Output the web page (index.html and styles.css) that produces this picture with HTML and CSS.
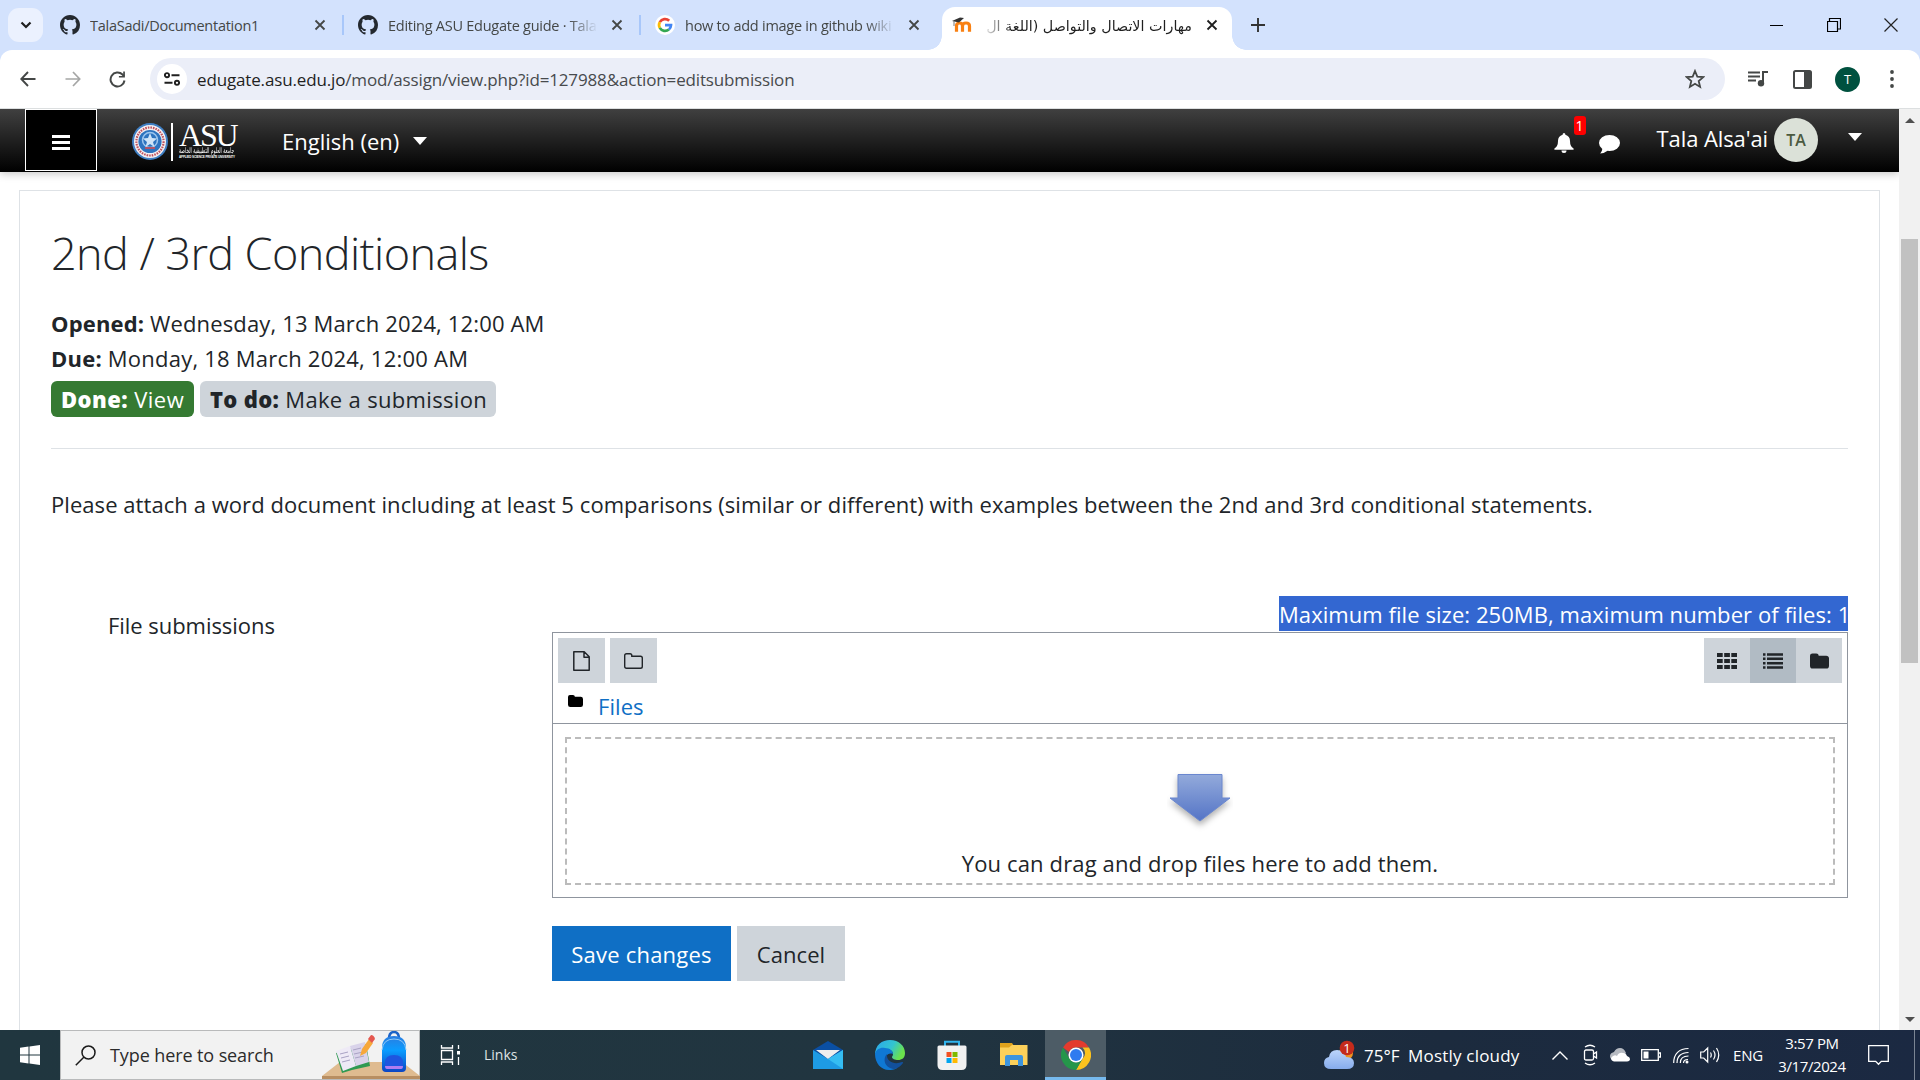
FILE: index.html
```html
<!DOCTYPE html>
<html lang="en">
<head>
<meta charset="utf-8">
<title>Editing submission</title>
<link rel="stylesheet" href="styles.css">
</head>
<body>
<svg class="defs" width="0" height="0">
  <symbol id="github" viewBox="0 0 16 16"><path fill="#24292f" d="M8 0C3.58 0 0 3.58 0 8c0 3.54 2.29 6.53 5.47 7.59.4.07.55-.17.55-.38 0-.19-.01-.82-.01-1.49-2.01.37-2.53-.49-2.69-.94-.09-.23-.48-.94-.82-1.13-.28-.15-.68-.52-.01-.53.63-.01 1.08.58 1.23.82.72 1.21 1.87.87 2.33.66.07-.52.28-.87.51-1.07-1.78-.2-3.64-.89-3.64-3.95 0-.87.31-1.59.82-2.15-.08-.2-.36-1.02.08-2.12 0 0 .67-.21 2.2.82a7.4 7.4 0 0 1 4 0c1.53-1.04 2.2-.82 2.2-.82.44 1.1.16 1.92.08 2.12.51.56.82 1.27.82 2.15 0 3.07-1.87 3.75-3.65 3.95.29.25.54.73.54 1.48 0 1.07-.01 1.93-.01 2.2 0 .21.15.46.55.38A8 8 0 0 0 16 8c0-4.42-3.58-8-8-8z"/></symbol>
  <symbol id="x" viewBox="0 0 12 12"><path d="M1.5 1.5l9 9M10.5 1.5l-9 9" stroke="currentColor" stroke-width="1.8" fill="none"/></symbol>
  <symbol id="folder" viewBox="0 0 20 16"><path fill="currentColor" d="M0 2.6A2.6 2.6 0 0 1 2.6 0h4A2.6 2.6 0 0 1 9.2 2.4H17A3 3 0 0 1 20 5.200V13a3 3 0 0 1-3 3H3a3 3 0 0 1-3-3z"/></symbol>
</svg>

<header class="tabstrip">
  <button class="tab-search"><svg width="12" height="8" viewBox="0 0 12 8"><path d="M1.500 1.500l4.500 4.500 4.500-4.500" fill="none" stroke="#1f1f1f" stroke-width="2.200"/></svg></button>
  <div class="tab"><svg class="fav"><use href="#github"/></svg><span class="tab-title"><span class="t-a">TalaSadi/Documentation1</span></span><svg class="close"><use href="#x"/></svg></div>
  <i class="tab-sep"></i>
  <div class="tab"><svg class="fav"><use href="#github"/></svg><span class="tab-title fade"><span class="t-b">Editing ASU Edugate guide · Tala</span></span><svg class="close"><use href="#x"/></svg></div>
  <i class="tab-sep"></i>
  <div class="tab"><svg class="fav" viewBox="0 0 20 20"><circle cx="10" cy="10" r="10" fill="#fff"/><g fill="none" stroke-width="2.700"><path stroke="#ea4335" d="M4.800 7.100A6 6 0 0 1 14.200 5.800"/><path stroke="#fbbc05" d="M4.800 12.900A6 6 0 0 1 4.800 7.100"/><path stroke="#34a853" d="M13.900 14.500A6 6 0 0 1 4.800 12.900"/><path stroke="#4285f4" d="M10 10.200h6A6 6 0 0 1 13.900 14.500"/></g></svg><span class="tab-title fade"><span class="t-c">how to add image in github wiki</span></span><svg class="close"><use href="#x"/></svg></div>
  <div class="tab active"><svg class="fav" viewBox="0 0 20 20"><path d="M4.500 16.800V11q0-3 3-3t3 3v5.800M10.500 11q0-3 3.500-3t3.500 3v5.800" fill="none" stroke="#f98012" stroke-width="3.200"/><path d="M0 6l8-3.500L12 3 7 7.500z" fill="#333"/><path d="M2 6v5" stroke="#777" fill="none"/></svg><span class="tab-title rtl" dir="rtl"><span class="t-d">مهارات الاتصال والتواصل (اللغة ال</span></span><svg class="close dark"><use href="#x"/></svg></div>
  <button class="new-tab"><svg width="14" height="14" viewBox="0 0 14 14"><path d="M7 0v14M0 7h14" stroke="#333" stroke-width="1.900"/></svg></button>
  <div class="win-controls">
    <svg width="14" height="14" viewBox="0 0 14 14"><path d="M0 7.500h13" stroke="#000"/></svg>
    <svg width="14" height="14" viewBox="0 0 14 14"><path d="M.5 3.500h10v10H.5zM2.500 3V.5h11v10.500h-3" fill="none" stroke="#000" stroke-width="1.200"/></svg>
    <svg width="14" height="14" viewBox="0 0 14 14"><path d="M.5.500l13 13M13.500.5l-13 13" stroke="#222" stroke-width="1.200"/></svg>
  </div>
</header>

<nav class="toolbar">
  <svg width="16" height="16" viewBox="0 0 16 16"><path d="M15.500 8H1.500M8 1L1.300 8 8 15" fill="none" stroke="#444746" stroke-width="1.900"/></svg>
  <svg class="fwd" width="16" height="16" viewBox="0 0 16 16"><path d="M.5 8h14M8 1l6.700 7L8 15" fill="none" stroke="#a5a6a5" stroke-width="1.700"/></svg>
  <svg class="reload" width="17" height="17" viewBox="0 0 17 17"><path d="M15.500 9.500A7 7 0 1 1 13.500 3.500L15 5.200" fill="none" stroke="#444746" stroke-width="2"/><path d="M15.900.5v6H9.900V5h4.300V.5z" fill="#444746"/></svg>
  <div class="omnibox">
    <span class="site-chip"><svg width="16" height="14" viewBox="0 0 16 14"><g fill="none" stroke="#1f1f1f" stroke-width="1.900"><circle cx="3" cy="3.200" r="2.100"/><path d="M7.500 3.200H15.500M.5 10.800H8.500"/><circle cx="13" cy="10.800" r="2.100"/></g></svg></span>
    <span class="url"><b>edugate.asu.edu.jo</b>/mod/assign/view.php?id=127988&amp;action=editsubmission</span>
    <svg class="star" width="20" height="20" viewBox="0 0 20 20"><path d="M10 2l2.300 5.600 6 .5-4.600 3.900 1.400 5.900L10 14.800l-5.100 3.100 1.400-5.900L1.700 8.100l6-.5z" fill="none" stroke="#444746" stroke-width="1.800"/></svg>
  </div>
  <svg class="tb-music" width="20" height="16" viewBox="0 0 20 16"><path d="M0 1.500h12M0 5.500h12M0 9.500h8" stroke="#444746" stroke-width="2"/><path d="M15 12V1h5" fill="none" stroke="#444746" stroke-width="2"/><circle cx="13" cy="12.300" r="3.200" fill="#444746"/></svg>
  <svg class="tb-panel" width="19" height="19" viewBox="0 0 19 19"><rect x="1" y="1" width="17" height="17" rx="1.500" fill="none" stroke="#444746" stroke-width="2"/><path d="M11 1h7v17h-7z" fill="#444746"/></svg>
  <span class="profile">T</span>
  <svg class="tb-dots" width="4" height="18" viewBox="0 0 4 18"><g fill="#444746"><circle cx="2" cy="2" r="1.900"/><circle cx="2" cy="9" r="1.900"/><circle cx="2" cy="16" r="1.900"/></g></svg>
</nav>

<div class="viewport">
  <div class="page">
    <div class="navbar">
      <button class="menu"><i></i><i></i><i></i></button>
      <div class="logo">
        <svg width="36" height="37" viewBox="0 0 36 37"><ellipse cx="18" cy="18.500" rx="18" ry="18.500" fill="#3f7fc4"/><ellipse cx="18" cy="18.500" rx="16" ry="16.500" fill="#f4f1f3"/><ellipse cx="18" cy="18.500" rx="13.600" ry="14" fill="none" stroke="#c0525d" stroke-width="2.200" stroke-dasharray="1.600 1"/><circle cx="18" cy="18.500" r="11.600" fill="#2e74bf"/><circle cx="18" cy="17" r="7.500" fill="none" stroke="#9dc6ee" stroke-width="1.500"/><path d="M18 10l2 5 5 .5-4 3.500 1.500 5-4.500-3-4.500 3 1.500-5-4-3.500 5-.5z" fill="#cfe4f7"/><path d="M13 24h10v2H13z" fill="#b35468"/></svg>
        <span class="logo-words"><span class="asu">ASU</span><span class="asu-ar">جامعة العلوم التطبيقية الخاصة</span><span class="asu-en">APPLIED SCIENCE PRIVATE UNIVERSITY</span></span>
      </div>
      <span class="lang">English ‎(en)‎</span><i class="caret"></i>
      <div class="bell"><svg width="20" height="20" viewBox="0 0 20 20"><path d="M10 0q1.400 0 1.400 1.700Q16 3 16 8q0 5.500 3.600 7.500v1.300H.4v-1.300Q4 13.500 4 8q0-5 4.600-6.300Q8.600 0 10 0zM7.500 17.500h5a2.500 2.500 0 0 1-5 0z" fill="#fff"/></svg><span class="count">1</span></div>
      <svg class="comment" width="21" height="19" viewBox="0 0 21 19"><path d="M3.400 13.500L9 15.500Q5 18.500 1.200 18.500q2-2 2.200-5z" fill="#fff"/><ellipse cx="10.500" cy="8" rx="10.500" ry="8" fill="#fff"/></svg>
      <span class="user">Tala Alsa'ai</span>
      <span class="initials">TA</span>
      <i class="caret"></i>
    </div>

    <main class="card">
      <h1>2nd / 3rd Conditionals</h1>
      <p class="date opened"><b>Opened:</b> Wednesday, 13 March 2024, 12:00 AM</p>
      <p class="date due"><b>Due:</b> Monday, 18 March 2024, 12:00 AM</p>
      <div class="badges"><span class="badge done"><b>Done:</b> View</span><span class="badge todo"><b>To do:</b> Make a submission</span></div>
      <p class="intro">Please attach a word document including at least 5 comparisons (similar or different) with examples between the 2nd and 3rd conditional statements.</p>
      <div class="form-row">
        <label>File submissions</label>
        <div class="field">
          <div class="restrictions"><span>Maximum file size: 250MB, maximum number of files: 1</span></div>
          <div class="filemanager">
            <div class="fm-bar">
              <button class="fm-btn"><svg width="17" height="20" viewBox="0 0 17 20"><path d="M.8.800h10.400l5 5V19.200H.8zM11 .8v5.400h5.200" fill="none" stroke="#212529" stroke-width="1.500" stroke-linejoin="round"/></svg></button>
              <button class="fm-btn"><svg width="19" height="16" viewBox="0 0 19 16"><path d="M.7 2.500Q.7.700 2.500.7h3.500q1.800 0 1.800 1.800v.7h8.700q1.800 0 1.800 1.800v8.500q0 1.800-1.800 1.800h-14Q.7 15.300.7 13.500z" fill="none" stroke="#212529" stroke-width="1.400"/></svg></button>
              <div class="fm-views">
                <button><svg width="20" height="16" viewBox="0 0 20 16"><g fill="#212529"><path d="M0 0h5.700v4H0zM7.200 0h5.700v4H7.200zM14.300 0H20v4h-5.700zM0 6h5.700v4H0zM7.200 6h5.700v4H7.200zM14.300 6H20v4h-5.700zM0 12h5.700v4H0zM7.200 12h5.700v4H7.200zM14.300 12H20v4h-5.700z"/></g></svg></button>
                <button class="on"><svg width="20" height="16" viewBox="0 0 20 16"><path d="M0 1.500h2.500M4 1.500h16M0 5.800h2.500M4 5.800h16M0 10.200h2.500M4 10.200h16M0 14.500h2.500M4 14.500h16" stroke="#212529" stroke-width="2.500"/></svg></button>
                <button><svg width="19" height="16"><use href="#folder"/></svg></button>
              </div>
            </div>
            <div class="fm-path"><svg width="15" height="12"><use href="#folder"/></svg><a>Files</a></div>
            <div class="fm-body"><div class="drop">
              <svg width="66" height="62" viewBox="0 0 66 62"><defs><linearGradient id="ag" x1="0" y1="0" x2="0" y2="1"><stop offset="0" stop-color="#93aadb"/><stop offset="1" stop-color="#5474c6"/></linearGradient></defs><path class="arrow" d="M11 3.500H55V27h8L33 50 3 27h8z" fill="url(#ag)" stroke="#6a87cf"/></svg>
              <span>You can drag and drop files here to add them.</span>
            </div></div>
          </div>
          <div class="actions"><button class="save">Save changes</button><button class="cancel">Cancel</button></div>
        </div>
      </div>
    </main>
  </div>
  <div class="scrollbar"><i class="up"></i><i class="thumb"></i><i class="down"></i></div>
</div>

<footer class="taskbar">
  <svg class="start" width="20" height="20" viewBox="0 0 20 20"><path fill="#fff" d="M0 2.800l8.500-1.200v8H0zM9.500 1.400L20 0v9.600H9.500zM0 10.500h8.500v8L0 17.300zM9.500 10.500H20V20L9.500 18.600z"/></svg>
  <div class="search">
    <svg width="21" height="21" viewBox="0 0 21 21"><circle cx="13.500" cy="7.500" r="6.500" fill="none" stroke="#1a1a1a" stroke-width="1.500"/><path d="M9 12L.8 20.200" stroke="#1a1a1a" stroke-width="1.500"/></svg>
    <span>Type here to search</span>
    <svg class="art" width="98" height="48" viewBox="0 0 98 48"><defs><linearGradient id="bp" x1="0" y1="0" x2="0" y2="1"><stop offset="0" stop-color="#2b7de0"/><stop offset=".4" stop-color="#0a9cff"/><stop offset="1" stop-color="#0b45c4"/></linearGradient></defs><path d="M18 31h62l18 14H0z" fill="#dfbb90"/><path d="M0 45h98v3H0z" fill="#b88e62"/><path d="M14 22l6 20 10-3 18-4-4-22z" fill="#2f9a52"/><path d="M14 20l14-5 6 20-13 5z" fill="#eeeaf6"/><path d="M28 15l15-4 4 20-13 4z" fill="#d9d3ea"/><path d="M18 23l8-2M19 27l8-2M20 31l8-2M31 19l8-2M32 23l9-2M33 27l9-2" stroke="#a9a2c4"/><path d="M38 25l2-7 7-10 4 4-7 10z" fill="#f7a83a"/><path d="M46 8l3-4q3 0 4 4l-3 4z" fill="#e4574f"/><path d="M67 8q0-7 5-7t5 7" fill="none" stroke="#1c63c8" stroke-width="2.500"/><path d="M60 17Q60 5 72 5t12 12v20q0 4-4 4H64q-4 0-4-4z" fill="url(#bp)"/><path d="M60 19Q61 8 72 8t12 11" fill="none" stroke="#8fc8f7"/><path d="M63 32q0-8 9-8t9 8v4q0 2-2 2H65q-2 0-2-2z" fill="#1e55df"/><path d="M63 35q0 3 2 3h14q2 0 2-3z" fill="#b07cf0"/></svg>
  </div>
  <svg class="taskview" width="20" height="20" viewBox="0 0 20 20"><path d="M1.500 0v3h11V0M1.500 20v-3h11v3M1.500 5.500h11v9h-11zM18.500 0v4M18.500 12v8" fill="none" stroke="#fff" stroke-width="1.300"/><path d="M17 6h3v3.500h-3z" fill="#fff"/></svg>
  <span class="links">Links</span>
  <div class="apps">
    <svg width="30" height="30" viewBox="0 0 30 30"><path d="M0 10L15 1l15 9v10H0z" fill="#0a4fa3"/><path d="M0 10v19h30V10L15 19z" fill="#1e9be4"/><path d="M3 10h24l-12 9z" fill="#eee"/><path d="M15 19l15-9v19z" fill="#35bdf2"/></svg>
    <svg width="30" height="30" viewBox="0 0 30 30"><defs><linearGradient id="e1" x1="0" y1="0" x2="1" y2=".4"><stop offset="0" stop-color="#2aa6ef"/><stop offset=".6" stop-color="#33c4d0"/><stop offset="1" stop-color="#6be24c"/></linearGradient></defs><path d="M0 15C0 5 7 0 15 0c9 0 15 6 15 13 0 5-3 7-7 7-3 0-6-1-6-3 0-1 1-1 1-3 0-3-3-5-7-5S1 11 0 15z" fill="url(#e1)"/><path d="M0 14C1 9 6 7 10 8c5 0 8 3 8 6-6-2-9 4-5 9 3 4 7 5 9 5-3 2-6 2-8 2C6 30 0 23 0 14z" fill="#0f78d4"/><path d="M12 14c-5 5-2 15 8 15 3-1 6-3 8-6 0-1 0-1-1-1-7 3-16 0-15-8z" fill="#12509c"/></svg>
    <svg width="30" height="30" viewBox="0 0 30 30"><path d="M8 6V1.800h14V6" fill="none" stroke="#2fb4ee" stroke-width="2"/><path d="M.5 7q0-1.500 1.500-1.500h26q1.500 0 1.500 1.500v18q0 5-5 5h-19q-5 0-5-5z" fill="#f1f1f1"/><path d="M9.500 12h5v5h-5z" fill="#f25022"/><path d="M15.500 12h5v5h-5z" fill="#7fba00"/><path d="M9.500 18h5v5h-5z" fill="#00a4ef"/><path d="M15.500 18h5v5h-5z" fill="#ffb900"/></svg>
    <svg width="30" height="30" viewBox="0 0 30 30"><path d="M1 3h12l2 3v4H1z" fill="#e0a21c"/><path d="M1 7.500h9l3-2.500h15.500v20H1z" fill="#fcd05a"/><path d="M6 26V17q0-2 2-2h14q2 0 2 2v9h-5v-6h-8v6z" fill="#3d94dd"/></svg>
    <span class="app-on"><svg width="30" height="30" viewBox="0 0 30 30"><path d="M2 7.500A15 15 0 0 1 28 7.500H15A7.500 7.500 0 0 0 8 12z" fill="#e33b2e"/><path d="M28 7.500A15 15 0 0 1 15 30l6.500-11.200A7.500 7.500 0 0 0 21.500 7.500z" fill="#fcc31e"/><path d="M2 7.500A15 15 0 0 0 15 30l6.500-11.200A7.500 7.500 0 0 1 8.500 18.700z" fill="#25964a"/><circle cx="15" cy="15" r="7.500" fill="#fff"/><circle cx="15" cy="15" r="6" fill="#2f7bf0"/></svg></span>
  </div>
  <svg class="weather" width="32" height="30" viewBox="0 0 32 30"><defs><linearGradient id="wc" x1="0" y1="0" x2="0" y2="1"><stop offset="0" stop-color="#bcd5fb"/><stop offset="1" stop-color="#86acec"/></linearGradient></defs><circle cx="22" cy="13" r="7" fill="#f0921f"/><path d="M7 29q-7 0-7-6 0-5 5-6 1-7 8-7t9 7q8 0 8 6t-7 6z" fill="url(#wc)"/><circle cx="23" cy="8" r="7.300" fill="#c42b1c"/><text x="23" y="12.500" text-anchor="middle" class="wnum">1</text></svg>
  <span class="temp">75°F</span><span class="cond">Mostly cloudy</span>
  <div class="tray">
    <svg width="16" height="9" viewBox="0 0 16 9"><path d="M.5 8.500L8 1l7.500 7.500" fill="none" stroke="#fff" stroke-width="1.400"/></svg>
    <svg class="cam" width="16" height="22" viewBox="0 0 16 22"><path d="M1.500 7.500Q1.500 6 3 6h6q1.500 0 1.500 1.500v7q0 1.500-1.500 1.500H3q-1.500 0-1.500-1.500zM10.500 10l3-2v6l-3-2M2 3q5-3.500 10 0M2 19q5 3.500 10 0" fill="none" stroke="#fff" stroke-width="1.300"/></svg>
    <svg class="cloud" width="20" height="14" viewBox="0 0 20 14"><path d="M3 12q-3-1-3-4t4-4q2-4 6-4t6 5L9 13z" fill="#b6bac1"/><path d="M4 13.500q-3-1-3-3.500 3-4 6-2 2-4 6-3 3 0 4 3 3 1 3 3t-3 2.500z" fill="#fff"/></svg>
    <svg class="batt" width="20" height="12" viewBox="0 0 20 12"><path d="M.7.700h16.600v10.600H.7zM18 4h1.500v4H18" fill="none" stroke="#fff" stroke-width="1.300"/><path d="M2.500 2.500h5v7h-5z" fill="#fff"/></svg>
    <svg class="wifi" width="16" height="17" viewBox="0 0 16 17"><g fill="none" stroke="#fff" stroke-width="1.200"><path d="M.7 16C.7 7 6 1.500 15.500 1.500"/><path d="M4 16C4 9.500 8 5.500 15.500 5.500"/><path d="M7.300 16c0-4.500 3-7 8.200-7"/><path d="M10.500 16q0-3.500 4.500-3.500"/></g><circle cx="14" cy="15" r="1.500" fill="#fff"/></svg>
    <svg class="vol" width="20" height="18" viewBox="0 0 20 18"><path d="M.7 6h3l4-4v14l-4-4h-3zM10.500 6.500q1.500 2.500 0 5M13.500 4.500q3 4.500 0 9M16.500 2q4.500 7 0 14" fill="none" stroke="#fff" stroke-width="1.200"/></svg>
    <span class="eng">ENG</span>
    <span class="clock"><span class="time">3:57 PM</span><span class="day">3/17/2024</span></span>
    <svg class="notif" width="21" height="21" viewBox="0 0 21 21"><path d="M.7.700h19.600v15.600h-7l-2.800 3-2.800-3h-7z" fill="none" stroke="#fff" stroke-width="1.300"/></svg>
    <i class="peek"></i>
  </div>
</footer>
</body>
</html>
```
FILE: styles.css
```css
* { box-sizing: border-box; }
body { margin: 0; width: 1920px; height: 1080px; overflow: hidden; display: flex; flex-direction: column; background: #fff; color: #212529; font-family: "Open Sans", "Noto Sans", sans-serif; font-size: 22px; }
button { border: 0; padding: 0; margin: 0; font: inherit; color: inherit; background: none; letter-spacing: inherit; }
svg { display: block; flex: none; }
span, a, label { white-space: nowrap; }
p, h1 { margin: 0; }
.defs { position: absolute; }

/* browser tab strip */
.tabstrip { height: 50px; background: #d3e2fd; display: flex; align-items: center; padding-left: 8px; font-size: 14.500px; color: #444746; flex: none; }
.tab-search { width: 35px; height: 34px; border-radius: 11px; background: #ebf1fe; display: grid; place-items: center; margin-right: 3px; }
.tab { width: 297px; height: 50px; display: flex; align-items: center; padding-left: 14px; }
.tab-sep { width: 2px; height: 20px; margin: 0 -1px; background: #a8c7fa; }
.fav { width: 20px; height: 20px; margin-right: 10px; }
.tab + .tab-sep + .tab .fav { margin-left: 1px; margin-right: 10px; }
.tab-title { width: 210px; overflow: hidden; line-height: 30px; margin-right: 14px; padding-top: 1px; display: flex; letter-spacing: -.26px; }
.tab + .tab-sep + .tab .tab-title { margin-right: 13px; }
.fade { -webkit-mask-image: linear-gradient(90deg, #000 86%, transparent); mask-image: linear-gradient(90deg, #000 86%, transparent); }
.close { width: 12px; height: 12px; color: #444746; margin-left: 0; }
.dark { color: #1f1f1f; }
.active { width: 290px; height: 43px; align-self: flex-end; margin-left: 5px; padding-left: 10px; padding-bottom: 7px; background: #fff; border-radius: 13px 13px 0 0; position: relative; color: #1f1f1f; }
.active::before, .active::after { content: ""; position: absolute; bottom: 0; width: 14px; height: 14px; }
.active::before { left: -14px; background: radial-gradient(circle at 0 0, transparent 13.500px, #fff 14px); }
.active::after { right: -14px; background: radial-gradient(circle at 100% 0, transparent 13.500px, #fff 14px); }
.rtl { -webkit-mask-image: linear-gradient(270deg, #000 86%, transparent); mask-image: linear-gradient(270deg, #000 86%, transparent); font-family: "DejaVu Sans", sans-serif; font-size: 14.300px; letter-spacing: 0; }
.new-tab { margin-left: 19px; }
.win-controls { margin-left: auto; display: flex; gap: 43px; padding-right: 22px; }

/* browser toolbar */
.toolbar { height: 59px; border-bottom: 1px solid #dcdfe0; background: linear-gradient(#d3e2fd, #d3e2fd) 0 0/100% 14px no-repeat; display: flex; align-items: center; padding-left: 20px; position: relative; flex: none; }
.toolbar::before { content: ""; position: absolute; inset: 0; background: #fff; border-radius: 12px 12px 0 0; }
.toolbar > * { position: relative; }
.fwd { margin-left: 29px; }
.reload { margin-left: 28px; }
.omnibox { margin-left: 24px; width: 1575px; height: 42px; border-radius: 21px; background: #ebeef8; display: flex; align-items: center; padding-left: 7px; }
.site-chip { width: 30px; height: 30px; border-radius: 50%; background: #fff; display: grid; place-items: center; }
.url { margin-left: 10px; font-size: 17px; letter-spacing: -.15px; color: #474a4d; }
.url b { font-weight: 400; color: #1f1f1f; }
.star { margin-left: auto; margin-right: 20px; }
.tb-music { margin-left: 23px; }
.tb-panel { margin-left: 25px; }
.profile { width: 25px; height: 25px; border-radius: 50%; background: #00513f; color: #fff; font-size: 13px; display: grid; place-items: center; margin-left: 23px; }
.tb-dots { margin-left: 30px; }

/* page viewport */
.viewport { height: 921px; display: flex; flex: none; overflow: hidden; }
.page { width: 1899px; }
.navbar { height: 63px; background: linear-gradient(#404040, #000); display: flex; align-items: center; color: #fff; padding-left: 25px; box-shadow: 0 2px 8px rgba(0,0,0,.22); }
.menu { width: 72px; height: 62px; background: #000; border: 1px solid #fff; display: flex; flex-direction: column; gap: 3px; align-items: center; justify-content: center; padding-top: 5px; margin-bottom: 1px; }
.menu i { width: 18px; height: 3px; background: #fff; }
.logo { display: flex; margin-left: 35px; gap: 3px; padding-top: 3px; }
.logo-words { border-left: 2px solid #fff; width: 65px; height: 38px; padding-left: 6px; display: flex; flex-direction: column; overflow: visible; }
.asu { font: 32px/24px "Liberation Serif", serif; letter-spacing: -2.200px; height: 24px; }
.asu-ar { font: 5px/7px "DejaVu Sans", sans-serif; height: 8px; transform: scale(.88, 1.500); transform-origin: 0 50%; }
.asu-en { font: bold 3px/4px "Liberation Sans", sans-serif; letter-spacing: -.1px; }
.lang { margin-left: 46px; padding-top: 1px; }
.lang + .caret { margin-left: 14px; }
.caret { border: 7px solid transparent; border-top: 8px solid #fff; border-bottom: 0; }
.bell { margin-left: auto; position: relative; padding-top: 5px; }
.count { position: absolute; left: 20px; top: -12px; width: 12px; height: 19px; border-radius: 3px; background: #f00; font-size: 14px; line-height: 20px; text-align: center; }
.comment { margin-left: 25px; margin-top: 7px; }
.user { margin-left: 37px; margin-top: -6px; letter-spacing: -.1px; }
.initials { width: 44px; height: 44px; border-radius: 50%; background: #dbe1d8; color: #4b5a40; font-size: 16px; font-weight: 600; display: grid; place-items: center; margin: -1px 0 0 6px; }
.initials + .caret { margin: -8px 37px 0 30px; }

.card { margin: 18px 19px 0 19px; height: 900px; border: 1px solid #dee2e6; padding: 30px 31px 0; line-height: 35px; letter-spacing: .06px; }
h1 { font-weight: 300; font-size: 45px; line-height: 64px; letter-spacing: -.58px; margin-bottom: 21px; }
.date { height: 35px; }
.opened { letter-spacing: .15px; }
.due { letter-spacing: .22px; }
.badges { display: flex; gap: 6px; margin-top: 5px; padding-bottom: 31px; border-bottom: 1px solid #dee2e6; }
.badge { height: 36px; border-radius: 6px; padding: 1px 9px 0 10px; letter-spacing: .33px; }
.badge b { font-weight: 800; }
.done { width: 143px; background: #357a32; color: #fff; letter-spacing: .45px; }
.todo { width: 296px; background: #ced4da; }
.intro { margin-top: 38px; }
.form-row { display: flex; margin-top: 74px; }
label { width: 501px; padding: 12px 0 0 57px; letter-spacing: -.05px; }
.field { flex: 1; }
.restrictions { display: flex; justify-content: flex-end; height: 36px; }
.restrictions span { background: #3367d1; color: #fff; height: 35px; width: 569px; padding-top: 1px; }
.filemanager { border: 1px solid #8f959e; height: 266px; }
.fm-bar { display: flex; gap: 5px; padding: 5px 5px 0; }
.fm-btn { width: 47px; height: 45px; background: #ced4da; display: grid; place-items: center; }
.fm-views { margin-left: auto; display: flex; width: 138px; }
.fm-views button { flex: 1; height: 45px; background: #ced4da; display: grid; place-items: center; }
.fm-views .on { background: #b1bbc4; }
.fm-path { height: 41px; border-bottom: 1px solid #8f959e; display: flex; padding: 6px 0 0 15px; color: #000; }
.fm-path svg { margin-top: 6px; }
.fm-path a { color: #0f6fc5; margin-left: 15px; }
.fm-body { padding: 13px 12px; }
.drop { height: 148px; border: 2px dashed #bbb; display: flex; flex-direction: column; align-items: center; padding-top: 32px; letter-spacing: .14px; }
.drop span { margin-top: 13px; }
.arrow { filter: drop-shadow(0 4px 3px rgba(0,0,0,.3)); }
.actions { display: flex; gap: 6px; margin-top: 28px; }
.save, .cancel { height: 55px; background: #ced4da; width: 108px; padding-top: 2px; }
.save { width: 179px; background: #0f6fc5; color: #fff; letter-spacing: .2px; }

.scrollbar { width: 21px; background: #f1f1f1; display: flex; flex-direction: column; align-items: center; }
.up { border: 5px solid transparent; border-top: 0; border-bottom: 5px solid #505050; margin-top: 9px; }
.thumb { width: 17px; height: 424px; margin-top: 116px; background: #c1c1c1; }
.down { border: 5px solid transparent; border-bottom: 0; border-top: 5px solid #505050; margin-top: auto; margin-bottom: 8px; }

/* desktop taskbar */
.taskbar { height: 50px; flex: none; background: linear-gradient(90deg, #20363f, #213540 45%, #1c2b3e 75%, #1b2942); display: flex; align-items: center; color: #fff; font-size: 15px; }
.start { margin-left: 20px; }
.search { margin-left: 20px; width: 360px; height: 50px; background: #f2f2f2; border: 1px solid #b9babb; display: flex; align-items: center; color: #2b2b2b; padding-left: 14px; }
.search span { margin-left: 14px; font-size: 18px; letter-spacing: -.1px; }
.art { margin-left: auto; margin-right: -1px; }
.taskview { margin-left: 20px; }
.links { margin-left: 24px; width: 33px; font-size: 14px; color: #dfe3e4; padding-bottom: 2px; }
.apps { display: flex; align-items: center; gap: 32px; margin-left: 296px; }
.app-on { width: 61px; height: 50px; background: #4d5c66; border-bottom: 3px solid #76b9ed; display: grid; place-items: center; padding-top: 3px; margin-left: -16px; }
.weather { margin-left: 218px; }
.wnum { font: 13px "Open Sans", sans-serif; fill: #fff; }
.temp { margin-left: 8px; width: 34px; font-size: 17px; }
.cond { margin-left: 10px; width: 111px; font-size: 17px; letter-spacing: .2px; }
.tray { display: flex; align-items: center; flex: 1; margin-left: 33px; }
.cam { margin-left: 15px; }
.cloud { margin-left: 11px; }
.batt { margin-left: 11px; }
.wifi { margin-left: 12px; }
.vol { margin-left: 11px; }
.eng { margin-left: 13px; width: 28px; letter-spacing: -.2px; }
.clock { width: 90px; margin-left: 6px; display: flex; flex-direction: column; align-items: center; line-height: 23px; letter-spacing: -.4px; }
.notif { margin-left: 11px; }
.peek { width: 1px; height: 50px; background: #7b8593; margin-left: 25px; }
```
